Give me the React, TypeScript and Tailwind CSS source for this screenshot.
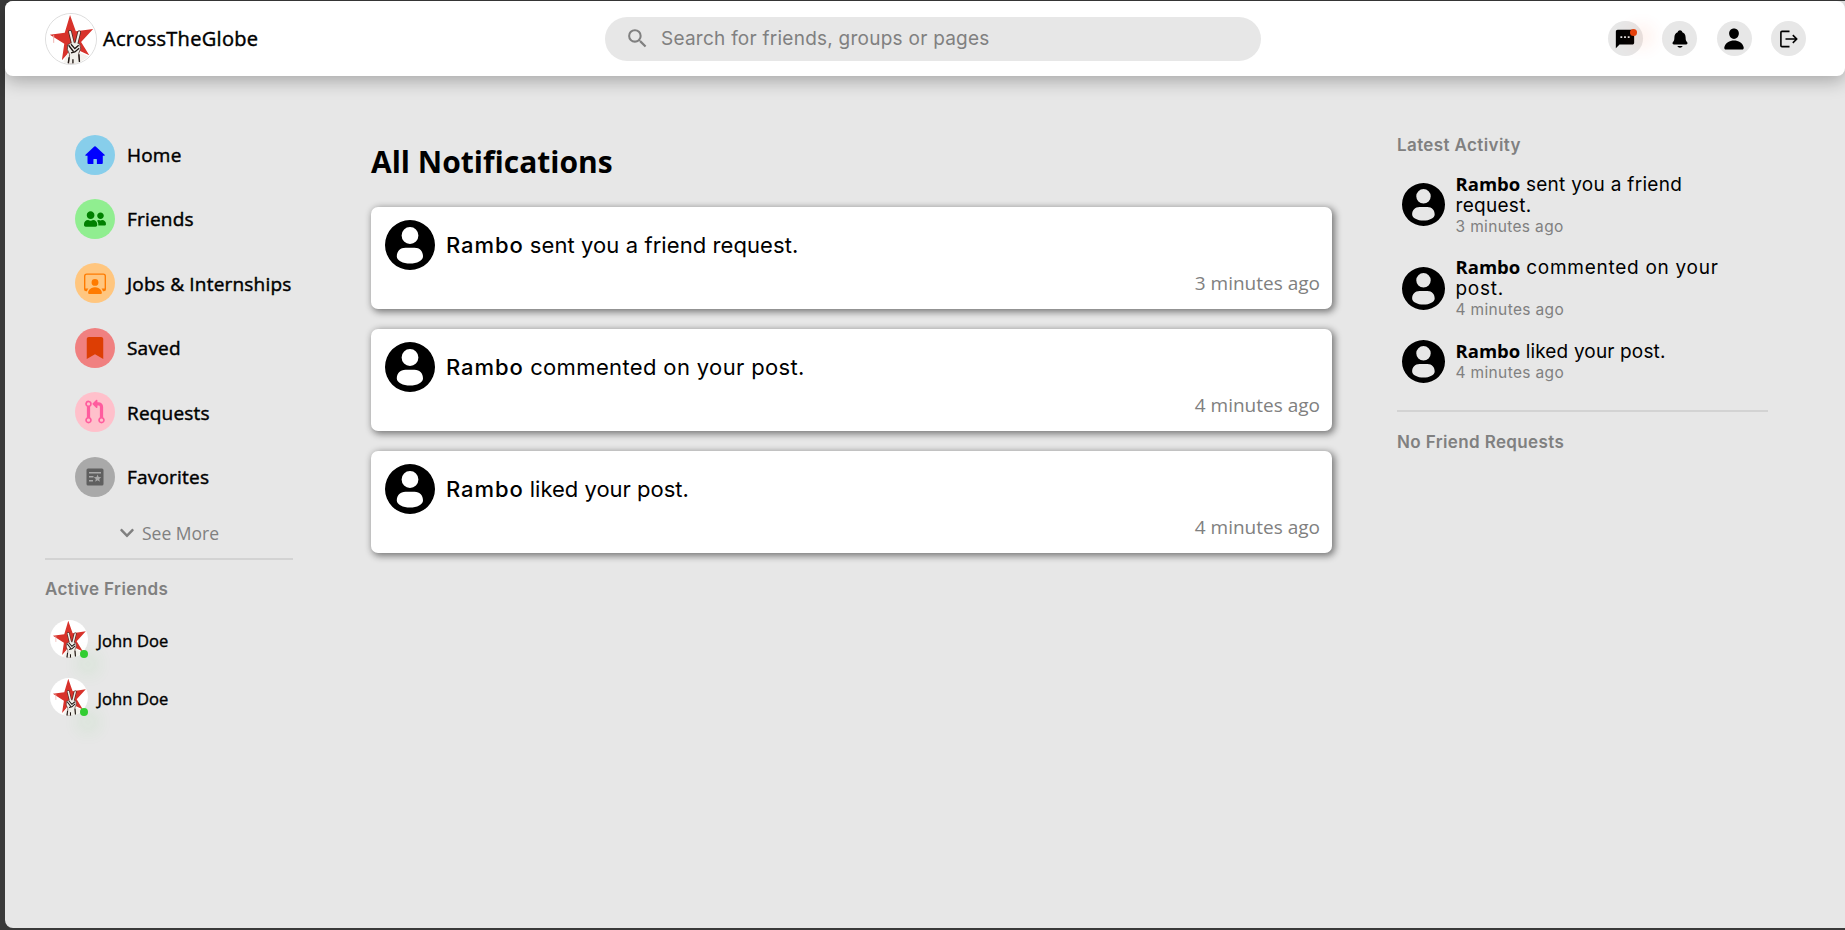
import React from "react";
import { MdSms, MdSearch } from "react-icons/md";
import { IoNotifications, IoPerson, IoGitPullRequest } from "react-icons/io5";
import { FaUserFriends, FaBookmark, FaChevronDown } from "react-icons/fa";
import { BsPersonWorkspace } from "react-icons/bs";

function StarLogo({ className }: { className: string }) {
  return (
    <svg viewBox="0 0 52 52" className={className}>
      <defs>
        <clipPath id="disc"><circle cx="26" cy="26" r="25.5" /></clipPath>
      </defs>
      <circle cx="26" cy="26" r="26" fill="#fff" />
      <g clipPath="url(#disc)">
        <path d="M25 1 L31 18 L49 15.500 L36.500 29 L45 43 L28 35 L16.500 48 L19 31 L4 21.500 L19.500 19.500 Z" fill="#d8322b" />
        <path d="M8 22v8" stroke="#efb0ac" strokeWidth="1" />
        <path d="M17 52 L23 40 L35 40 L44 44 L46 52 Z" fill="#f4f2ee" />
        <path d="M25 18.500 L28 31 M34.500 19 L31.500 31" fill="none" stroke="#4a2a25" strokeWidth="3.800" strokeLinecap="round" />
        <path d="M22.500 32 Q28 28 35 31 Q37.500 36 34 41 L35 52 H23.500 L24.500 42 Q21 37 22.500 32 Z" fill="#f1efea" stroke="#4a2a25" strokeWidth=".8" />
        <path d="M25 18.500 L28.300 32 M34.500 19 L31.300 32" fill="none" stroke="#f1efea" strokeWidth="2.100" strokeLinecap="round" />
        <path d="M23.500 32.500 L28.500 39 M26 31.500 L30 36 L34 32.500 M34.500 35.500 L30 39.500 L26 40.500" fill="none" stroke="#1f1714" strokeWidth="1.400" />
        <path d="M24 45 L23 52 M28 47 V52 M34.200 42 L35 52" fill="none" stroke="#1f1714" strokeWidth="1.400" />
      </g>
    </svg>
  );
}

function UserDisc({ className }: { className: string }) {
  return (
    <svg viewBox="0 0 50 50" className={className}>
      <path
        fillRule="evenodd"
        d="M25 0a25 25 0 1 1 0 50a25 25 0 0 1 0-50Z M25 7.100a8.400 8.400 0 1 0 0 16.800a8.400 8.400 0 0 0 0-16.800Z M20.500 27.800C15 27.800 11.800 31.500 11.800 36.500C11.800 40.500 18 43.600 25 43.600C32 43.600 38 40.500 38 36.500C38 31.500 35 27.800 29.500 27.800Z"
      />
    </svg>
  );
}

function HomeIcon() {
  return (
    <svg viewBox="0 0 20 18" className="h-[18px] w-5" fill="blue">
      <path d="M9.300.500q.700-.600 1.400 0l8.900 8.300q.500.600-.200.900h-1.600v7.300q0 1-1 1h-4.900v-4.500q0-.500-.500-.500H8.900q-.500 0-.5.500V18H3.500q-1 0-1-1V9.700H.700q-.800-.300-.200-.900z" />
    </svg>
  );
}

function FavoritesIcon() {
  return (
    <svg viewBox="0 0 18 18" className="size-[18px]">
      <rect x=".5" y=".5" width="17" height="17" rx="1.500" fill="#5f5f5f" />
      <path d="M3 4.700h12M3 8.700h4.500M3 12.700h4" stroke="#a9a9a9" strokeWidth="1.400" />
      <path d="M11.500 6.500l1.100 2.500 2.700.200-2.100 1.800.7 2.700-2.400-1.400-2.300 1.400.6-2.700-2-1.800 2.700-.2z" fill="#a9a9a9" />
    </svg>
  );
}

function ExitIcon() {
  return (
    <svg viewBox="0 0 18 18" className="size-[18px]" fill="none" stroke="#000" strokeWidth="1.600" strokeLinejoin="round">
      <path d="M9.500 1.400H2Q.9 1.400.9 2.500v13q0 1.100 1.100 1.100h7.500M5.500 9h11.300M12.800 5.200L16.800 9l-4 3.800" />
    </svg>
  );
}

const nav = [
  { label: "Home", disc: "bg-[#87ceeb]", icon: <HomeIcon /> },
  { label: "Friends", disc: "bg-[#90ee90]", icon: <FaUserFriends className="size-[22px] text-[#008000]" /> },
  { label: "Jobs & Internships", disc: "bg-[#ffc67f]", icon: <BsPersonWorkspace className="size-[22px] text-[#ff7b00]" /> },
  { label: "Saved", disc: "bg-[#f08080]", icon: <FaBookmark className="size-[22px] text-[#dd3e04]" /> },
  { label: "Requests", disc: "bg-[#ffc0cb]", icon: <IoGitPullRequest className="size-[26px] text-[#ff5c9e]" /> },
  { label: "Favorites", disc: "bg-[#a9a9a9]", icon: <FavoritesIcon /> },
];

const notifications = [
  {
    action: "sent you a friend request.",
    time: "3 minutes ago",
    lines: ["sent you a friend", "request."],
    wide: "tracking-[0.08px]",
    narrow: "tracking-[0.3px]",
  },
  {
    action: "commented on your post.",
    time: "4 minutes ago",
    lines: ["commented on your", "post."],
    wide: "tracking-[0.36px]",
    narrow: "tracking-[0.72px]",
  },
  {
    action: "liked your post.",
    time: "4 minutes ago",
    lines: ["liked your post."],
    wide: "tracking-normal",
    narrow: "tracking-[0.15px]",
  },
];

function SectionTitle({ children }: { children: React.ReactNode }) {
  return (
    <h3 className="h-6 font-['Inter',sans-serif] text-[17px] font-semibold leading-6 tracking-[0.38px] text-[#808080]">
      {children}
    </h3>
  );
}

function Header() {
  return (
    <header className="flex h-[75px] items-center rounded-lg bg-white pl-10 pr-[39px] shadow-[0_5px_18px_rgba(0,0,0,0.28)]">
      <div className="flex w-[560px] items-center gap-[6px]">
        <StarLogo className="size-[52px] rounded-full border border-[#ddd]" />
        <span className="text-[20px] leading-6 tracking-[0.3px] [-webkit-text-stroke:0.45px_black]">AcrossTheGlobe</span>
      </div>
      <div className="flex h-11 w-[656px] items-center rounded-[22px] bg-[#e7e7e7] pl-5 text-[#808080]">
        <MdSearch className="size-[25px]" />
        <span className="ml-[11px] pt-[2px] font-['Inter',sans-serif] text-[19px] tracking-[0.25px]">Search for friends, groups or pages</span>
      </div>
      <div className="flex flex-1 items-center justify-end gap-[19.500px]">
        <span className="relative grid size-[35px] place-items-center rounded-full bg-[#e7e7e7]">
          <MdSms className="size-[22px]" />
          <i className="absolute left-[22px] top-2 size-[7px] rounded-full bg-[#e5400b] shadow-[8px_4px_18px_6px_rgba(255,69,0,0.12)]" />
        </span>
        <span className="grid size-[35px] place-items-center rounded-full bg-[#e7e7e7]"><IoNotifications className="size-5" /></span>
        <span className="grid size-[35px] place-items-center rounded-full bg-[#e7e7e7]"><IoPerson className="size-6" /></span>
        <span className="grid size-[35px] place-items-center rounded-full bg-[#e7e7e7]"><ExitIcon /></span>
      </div>
    </header>
  );
}

function Sidebar() {
  return (
    <aside className="w-[248px] shrink-0">
      <ul className="pl-[30px] pt-[46.500px]">
        {nav.map((n) => (
          <li key={n.label} className="flex h-[64.400px] items-center gap-3 whitespace-nowrap text-[19px] tracking-[0.2px]">
            <span className={`grid size-10 shrink-0 place-items-center rounded-full ${n.disc}`}>{n.icon}</span>
            <span className="pt-px [-webkit-text-stroke:0.45px_black]">{n.label}</span>
          </li>
        ))}
      </ul>
      <div className="flex h-[49px] items-center gap-[7px] pb-px pl-[74px] text-[17.500px] text-[#808080]">
        <FaChevronDown className="size-4" />
        See More
      </div>
      <div className="mb-[17px] h-[2px] bg-[#d3d3d3]" />
      <SectionTitle>Active Friends</SectionTitle>
      {["a", "b"].map((k) => (
        <div key={k} className="mt-[18px] flex h-10 items-center gap-[9.500px] pl-[5px] text-[16.500px] tracking-[0.1px]">
          <span className="relative">
            <StarLogo className="size-[38px]" />
            <i className="absolute left-[30px] top-[30px] size-2 rounded-full bg-[#32cd32] shadow-[4px_10px_18px_5px_rgba(50,205,50,0.12)]" />
          </span>
          <span className="pt-[6px] [-webkit-text-stroke:0.4px_black]">John Doe</span>
        </div>
      ))}
    </aside>
  );
}

export default function App() {
  return (
    <div className="h-[930px] w-[1845px] overflow-hidden bg-[#3a3a3a] pb-[2px] pl-[5px] pt-px font-['Open_Sans','Noto_Sans',sans-serif] text-black">
      <div className="h-full rounded-lg rounded-r-none bg-[#e7e7e7]">
        <Header />
        <div className="flex pl-10">
          <Sidebar />
          <main className="ml-[78px] w-[961px] pt-[64px]">
            <h1 className="mb-[23px] h-11 text-[30px] font-bold leading-[44px]">All Notifications</h1>
            <div className="flex flex-col gap-5">
              {notifications.map((n) => (
                <article key={n.action} className="h-[102px] rounded-[7px] bg-white pl-[14px] pr-[12px] pt-[13px] shadow-[2px_2px_7px_1px_rgba(0,0,0,0.48)]">
                  <div className="flex h-[50px] items-center gap-[11px] font-['Inter',sans-serif] text-[22px]">
                    <UserDisc className="size-[50px]" />
                    <p className={n.wide}><b className="font-medium tracking-[0.9px]">Rambo</b> {n.action}</p>
                  </div>
                  <div className="text-right text-[19px] leading-[27px] text-[#808080]">{n.time}</div>
                </article>
              ))}
            </div>
          </main>
          <aside className="ml-[65px] w-[371px] pt-[57px]">
            <SectionTitle>Latest Activity</SectionTitle>
            <div className="flex flex-col gap-[19.500px] pt-[15.500px]">
              {notifications.map((n) => (
                <div key={n.action} className="flex items-center gap-[10.500px] pl-[5px]">
                  <UserDisc className="size-[43px]" />
                  <div className="font-['Inter',sans-serif] text-[19px] leading-[21px]">
                    <p className={n.narrow}>
                      <b className="font-['Open_Sans',sans-serif] text-[18.500px] tracking-normal">Rambo</b> {n.lines[0]}
                      {n.lines[1] && <><br />{n.lines[1]}</>}
                    </p>
                    <p className="text-[15.500px] leading-[21px] tracking-[0.35px] text-[#808080]">{n.time}</p>
                  </div>
                </div>
              ))}
            </div>
            <div className="mb-[18px] mt-[27px] h-[2px] bg-[#d3d3d3]" />
            <SectionTitle>No Friend Requests</SectionTitle>
          </aside>
        </div>
      </div>
    </div>
  );
}
